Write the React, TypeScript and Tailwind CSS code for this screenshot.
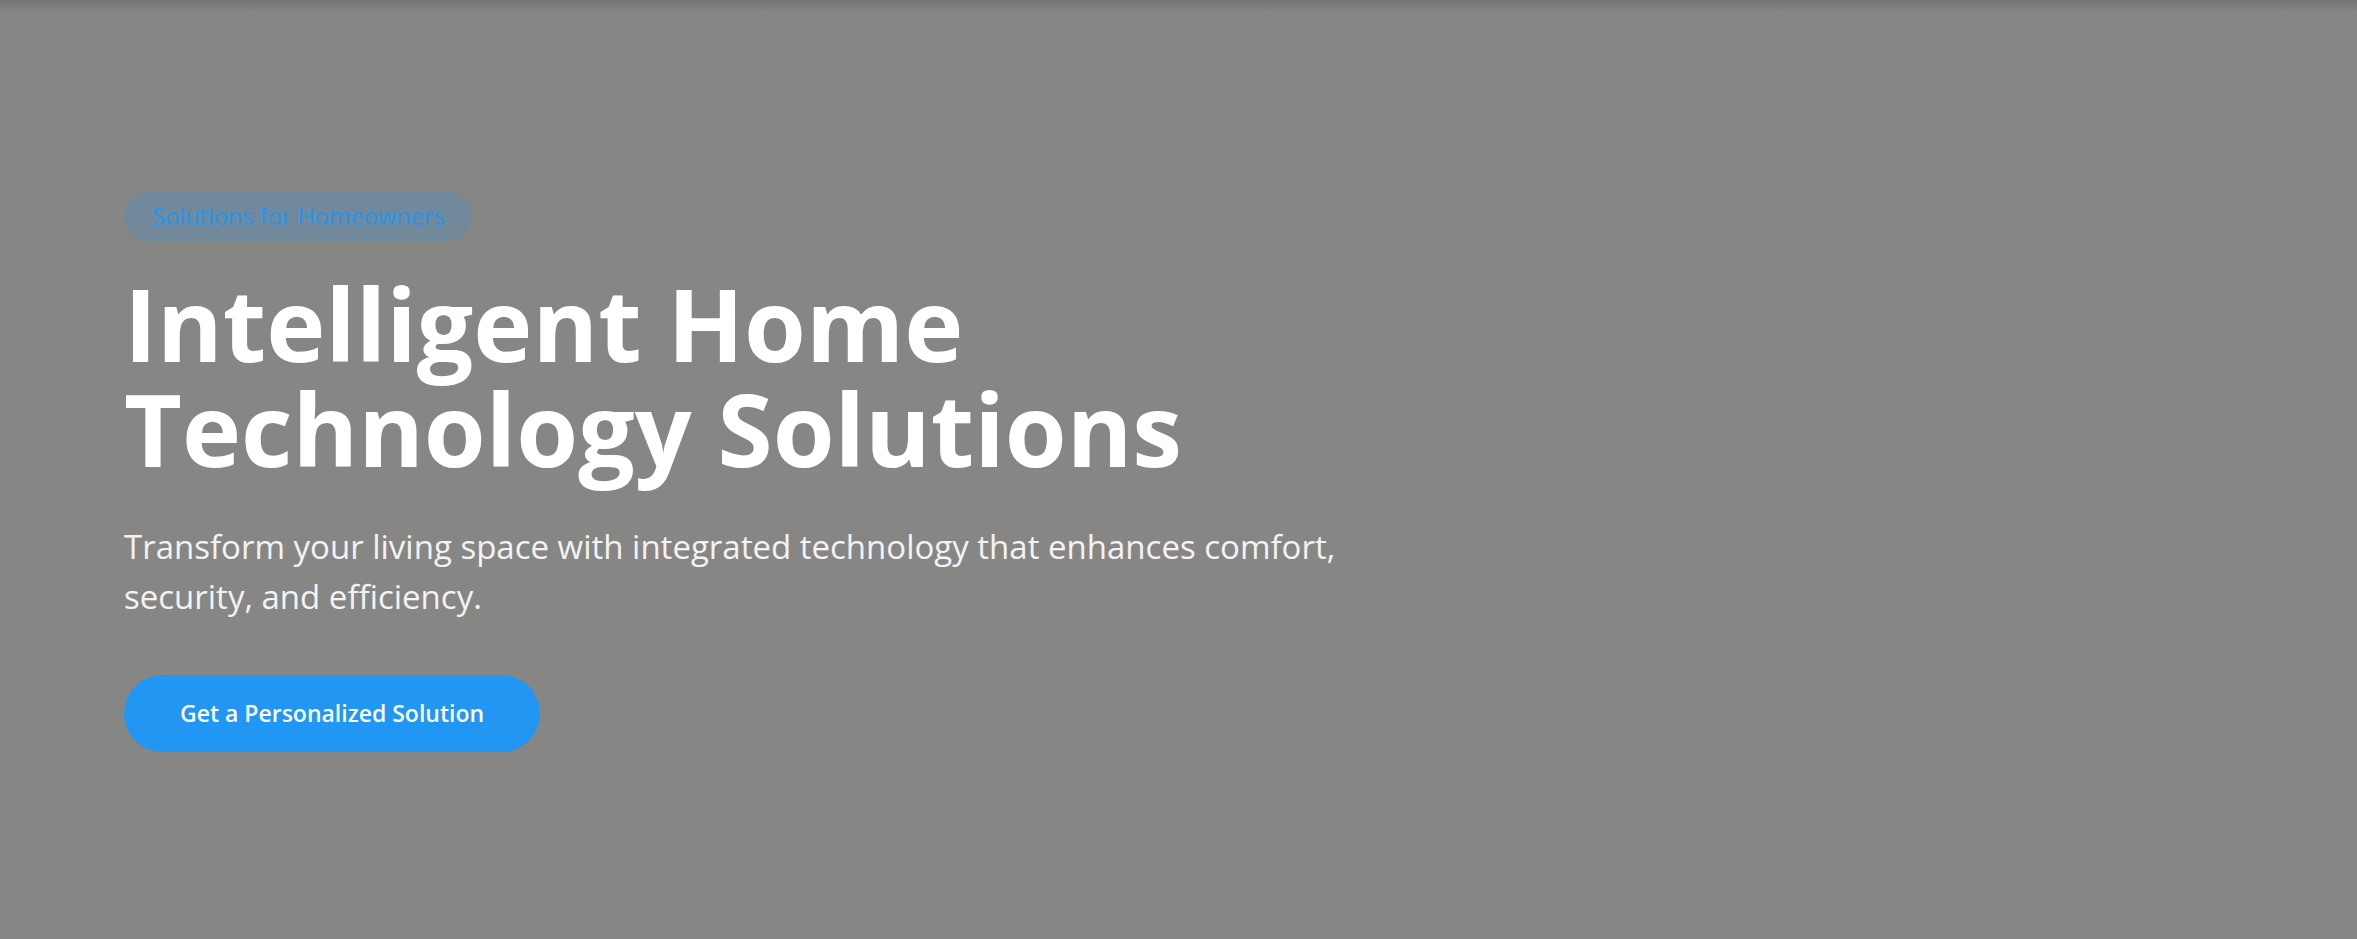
import React from "react";

const App = () => {
    return (
        <section
            className="relative w-full h-[939px] bg-[#868685] flex flex-col pt-[192px] px-[124px] overflow-hidden"
            style={{ fontFamily: '"Open Sans", "Noto Sans", sans-serif' }}
        >
            {/* shadow from the header sitting above */}
            <div className="absolute top-0 left-0 right-0 h-[12px] bg-gradient-to-b from-[#00000026] to-transparent pointer-events-none" />

            <div className="flex flex-col items-start">
                <span className="inline-flex items-center h-[49px] px-[28px] rounded-full bg-[#2196f333] text-[#2196f3] text-[23.5px] font-medium">
                    Solutions for Homeowners
                </span>

                <h1 className="mt-[30px] text-white font-bold text-[100px] leading-[105px]">
                    Intelligent Home
                    <br />
                    Technology Solutions
                </h1>

                <p className="mt-[41px] text-white/90 text-[33px] leading-[50px] max-w-[1260px]">
                    Transform your living space with integrated technology that enhances comfort, security, and efficiency.
                </p>

                <button className="mt-[53px] h-[77px] px-[56px] rounded-full bg-[#2196f3] text-white text-[23px] font-semibold">
                    Get a Personalized Solution
                </button>
            </div>
        </section>
    );
};

export default App;
